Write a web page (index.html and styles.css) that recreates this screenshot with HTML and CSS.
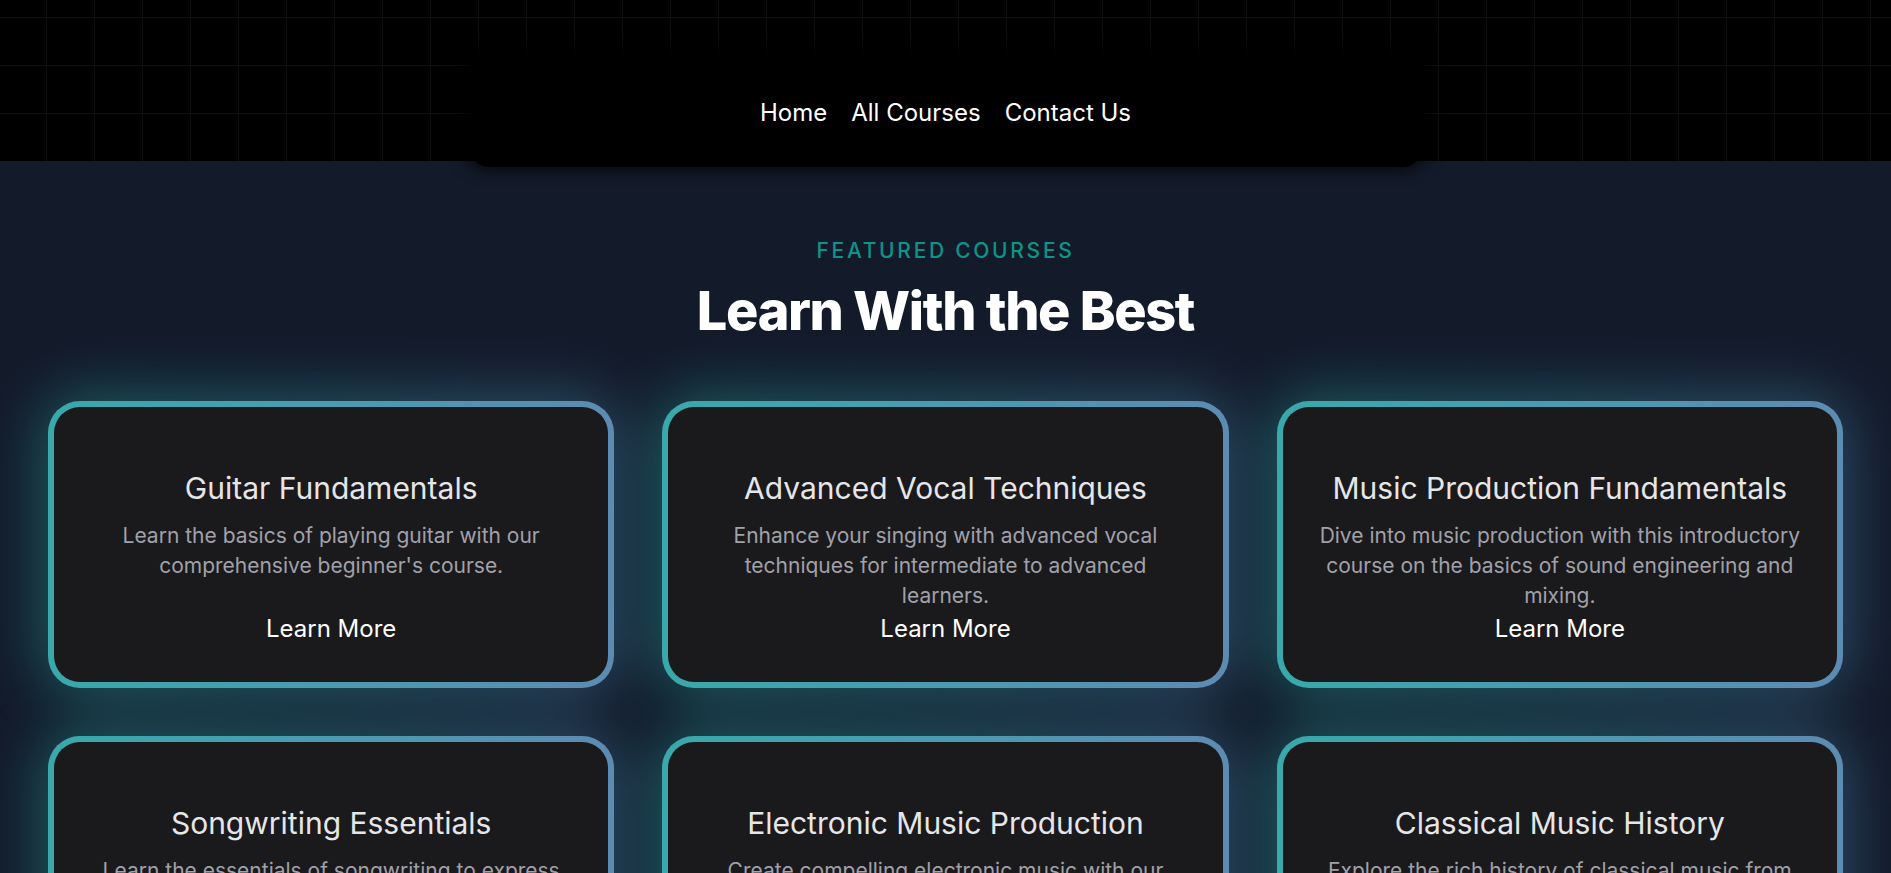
FILE: index.html
```html
<!DOCTYPE html>
<html lang="en">
<head>
<meta charset="utf-8">
<title>Learn With the Best</title>
<link rel="stylesheet" href="styles.css">
</head>
<body>
<header class="site-header">
  <nav class="nav-pill">
    <a href="#" class="nav-link">Home</a>
    <a href="#" class="nav-link">All Courses</a>
    <a href="#" class="nav-link">Contact Us</a>
  </nav>
</header>
<main class="courses">
  <p class="eyebrow">Featured Courses</p>
  <h2 class="title">Learn With the Best</h2>
  <div class="grid">
    <article class="card">
      <div class="card-inner">
        <h3 class="card-title">Guitar Fundamentals</h3>
        <p class="card-desc">Learn the basics of playing guitar with our comprehensive beginner's course.</p>
        <a href="#" class="card-link">Learn More</a>
      </div>
    </article>
    <article class="card">
      <div class="card-inner">
        <h3 class="card-title">Advanced Vocal Techniques</h3>
        <p class="card-desc">Enhance your singing with advanced vocal techniques for intermediate to advanced learners.</p>
        <a href="#" class="card-link">Learn More</a>
      </div>
    </article>
    <article class="card">
      <div class="card-inner">
        <h3 class="card-title">Music Production Fundamentals</h3>
        <p class="card-desc">Dive into music production with this introductory course on the basics of sound engineering and mixing.</p>
        <a href="#" class="card-link">Learn More</a>
      </div>
    </article>
    <article class="card">
      <div class="card-inner">
        <h3 class="card-title">Songwriting Essentials</h3>
        <p class="card-desc">Learn the essentials of songwriting to express yourself through original music and lyrics.</p>
        <a href="#" class="card-link">Learn More</a>
      </div>
    </article>
    <article class="card">
      <div class="card-inner">
        <h3 class="card-title">Electronic Music Production</h3>
        <p class="card-desc">Create compelling electronic music with our hands-on course covering synths and sequencing.</p>
        <a href="#" class="card-link">Learn More</a>
      </div>
    </article>
    <article class="card">
      <div class="card-inner">
        <h3 class="card-title">Classical Music History</h3>
        <p class="card-desc">Explore the rich history of classical music from the Baroque period to the modern era.</p>
        <a href="#" class="card-link">Learn More</a>
      </div>
    </article>
  </div>
</main>
</body>
</html>
```

FILE: styles.css
```css
* {
  box-sizing: border-box;
}

html, body {
  margin: 0;
  padding: 0;
}

body {
  background: #131a2a;
  font-family: Inter, "Noto Sans", "Liberation Sans", sans-serif;
  color: #fff;
}

a {
  text-decoration: none;
  color: inherit;
}

.site-header {
  height: 161px;
  background-color: #000;
  background-image:
    linear-gradient(to right, #111 1px, transparent 1px),
    linear-gradient(to bottom, #111 1px, transparent 1px);
  background-size: 48px 48px;
  background-position: 46px 17px;
  padding-top: 58px;
  position: relative;
  z-index: 2;
}

.nav-pill {
  width: 950px;
  height: 109px;
  margin: 0 auto;
  background: #000;
  border-radius: 0 0 18px 18px;
  box-shadow: 0 -6px 18px 6px #000;
  display: flex;
  align-items: center;
  justify-content: center;
  gap: 24px;
}

.nav-link {
  font-size: 24px;
  line-height: 32px;
  color: #fff;
}

.courses {
  padding: 76px 48px 80px;
  text-align: center;
  position: relative;
  z-index: 1;
}

.eyebrow {
  margin: 0;
  font-size: 21px;
  line-height: 28px;
  font-weight: 500;
  letter-spacing: 2.7px;
  text-transform: uppercase;
  color: #0d9488;
}

.title {
  margin: 19px 0 63px;
  font-size: 54px;
  line-height: 54px;
  font-weight: 800;
  letter-spacing: -0.025em;
  color: #fff;
}

.grid {
  display: grid;
  grid-template-columns: repeat(3, 1fr);
  gap: 48px;
}

.card {
  position: relative;
  border-radius: 32px;
  padding: 6px;
  background: linear-gradient(90deg, #39a9ab 0%, #4a9bb0 50%, #5d8bb2 100%);
}

.card::before {
  content: "";
  position: absolute;
  inset: -6px;
  border-radius: 40px;
  background: linear-gradient(90deg, #2ab8b2 0%, #38a6b2 50%, #5090bc 100%);
  filter: blur(30px);
  opacity: 0.42;
  z-index: -1;
}

.card-inner {
  background: #1a1a1c;
  border-radius: 26px;
  padding: 63px 32px 37px;
  height: 275px;
}

.card-title {
  margin: 0;
  font-size: 30px;
  line-height: 36px;
  font-weight: 400;
  color: #e6e6e8;
}

.card-desc {
  margin: 15px 0 0;
  height: 92px;
  font-size: 21px;
  line-height: 30px;
  color: #a1a1aa;
}

.card-link {
  display: block;
  font-size: 24px;
  line-height: 32px;
  color: #fff;
}
```
